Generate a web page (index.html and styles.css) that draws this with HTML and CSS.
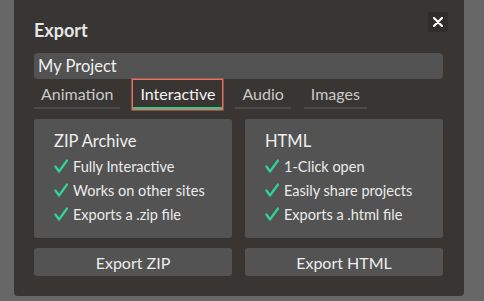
FILE: index.html
```html
<!DOCTYPE html>
<html lang="en">

<head>
    <meta charset="UTF-8">
    <meta name="viewport" content="width=device-width, initial-scale=1.0">
    <title>Export</title>
    <link rel="stylesheet" href="styles.css">
</head>

<body>
    <div class="dialog">
        <header>
            <h1>Export</h1>
            <button class="close-btn" aria-label="Close">
                <svg width="10" height="10" viewBox="0 0 10 10">
                    <path d="M1 1 L9 9 M9 1 L1 9" stroke="#fff" stroke-width="2.2" stroke-linecap="round" fill="none"/>
                </svg>
            </button>
        </header>

        <input class="name-input" type="text" value="My Project">

        <div class="tabs">
            <div class="tab">Animation</div>
            <div class="tab active">Interactive</div>
            <div class="tab">Audio</div>
            <div class="tab">Images</div>
        </div>

        <div class="options">
            <div class="option-card">
                <h2>ZIP Archive</h2>
                <ul>
                    <li><svg class="check" viewBox="0 0 14 14"><path d="M1.5 7.5 L5 12.5 L13 1.5"/></svg>Fully Interactive</li>
                    <li><svg class="check" viewBox="0 0 14 14"><path d="M1.5 7.5 L5 12.5 L13 1.5"/></svg>Works on other sites</li>
                    <li><svg class="check" viewBox="0 0 14 14"><path d="M1.5 7.5 L5 12.5 L13 1.5"/></svg>Exports a .zip file</li>
                </ul>
            </div>
            <div class="option-card">
                <h2>HTML</h2>
                <ul>
                    <li><svg class="check" viewBox="0 0 14 14"><path d="M1.5 7.5 L5 12.5 L13 1.5"/></svg>1-Click open</li>
                    <li><svg class="check" viewBox="0 0 14 14"><path d="M1.5 7.5 L5 12.5 L13 1.5"/></svg>Easily share projects</li>
                    <li><svg class="check" viewBox="0 0 14 14"><path d="M1.5 7.5 L5 12.5 L13 1.5"/></svg>Exports a .html file</li>
                </ul>
            </div>
            <button class="export-btn">Export ZIP</button>
            <button class="export-btn">Export HTML</button>
        </div>
    </div>
</body>

</html>
```

FILE: styles.css
```css
body {
    font-family: Lato, "Open Sans", sans-serif;
    margin: 0;
    padding: 0;
    height: 100vh;
    overflow: hidden;
    background-color: #676767;
}

.dialog {
    box-sizing: border-box;
    width: 450px;
    height: 296px;
    margin-left: 14px;
    padding: 12px 21px 0 20px;
    background-color: #393533;
    border-radius: 0 0 4px 4px;
    color: #ececec;
}

header {
    display: flex;
    justify-content: space-between;
    align-items: flex-start;
}

header h1 {
    font-size: 18px;
    line-height: 22px;
    font-weight: bold;
    margin: 7px 0 0;
    color: #e6e6e6;
}

.close-btn {
    width: 20px;
    height: 20px;
    margin-right: -5px;
    padding: 0;
    border: none;
    border-radius: 2px;
    background-color: #2f2c2b;
    display: flex;
    align-items: center;
    justify-content: center;
    cursor: pointer;
}

.name-input {
    display: block;
    box-sizing: border-box;
    width: 100%;
    height: 26px;
    margin-top: 12px;
    padding: 0 4px;
    border: none;
    border-radius: 4px;
    background-color: #525252;
    color: #f0f0f0;
    font-family: inherit;
    font-size: 16.5px;
    outline: none;
}

.tabs {
    display: flex;
    gap: 13px;
    margin-top: 1px;
}

.tab {
    box-sizing: border-box;
    height: 29px;
    padding: 0 7px;
    line-height: 27px;
    font-size: 16px;
    color: #c9c9c9;
    border-bottom: 2px solid #4b4b4b;
}

.tab.active {
    color: #f4f4f4;
    border-bottom-color: #2fcb8c;
    box-shadow: 0 0 0 1.5px #e8705f;
}

.options {
    display: grid;
    grid-template-columns: 1fr 1fr;
    column-gap: 13px;
    row-gap: 10px;
    margin-top: 10px;
}

.option-card {
    height: 119px;
    box-sizing: border-box;
    padding: 12px 20px;
    background-color: #535353;
    border-radius: 3px;
}

.option-card h2 {
    font-size: 16.5px;
    line-height: 20px;
    font-weight: normal;
    margin: 0 0 3px;
    color: #efefef;
}

.option-card ul {
    list-style-type: none;
    margin: 0;
    padding: 0;
}

.option-card li {
    display: flex;
    align-items: center;
    height: 24px;
    font-size: 14.5px;
    color: #ebebeb;
}

.check {
    width: 14px;
    height: 14px;
    margin-right: 5px;
    fill: none;
    stroke: #30d498;
    stroke-width: 2.2;
    stroke-linecap: round;
    stroke-linejoin: round;
}

.export-btn {
    height: 28px;
    padding: 0;
    border: none;
    border-radius: 3px;
    background-color: #535353;
    color: #ededed;
    font-family: inherit;
    font-size: 16px;
    cursor: pointer;
}
```
